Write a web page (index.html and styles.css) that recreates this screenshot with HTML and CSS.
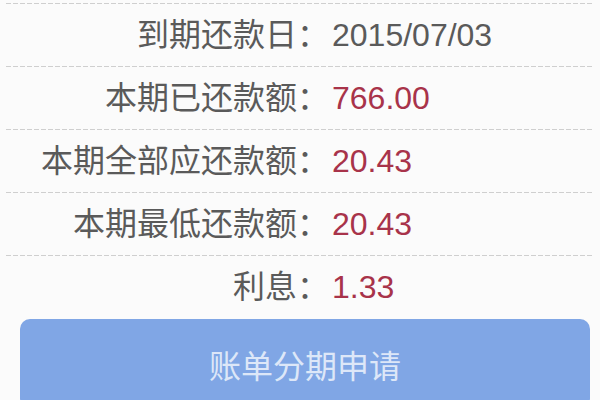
FILE: index.html
```html
<!DOCTYPE html>
<html lang="zh-CN">
<head>
<meta charset="utf-8">
<title>账单</title>
<link rel="stylesheet" href="styles.css">
</head>
<body>
<div class="page">
  <div class="list">
    <div class="row"><span class="label">到期还款日：</span><span class="value">2015/07/03</span></div>
    <div class="row"><span class="label">本期已还款额：</span><span class="value red">766.00</span></div>
    <div class="row"><span class="label">本期全部应还款额：</span><span class="value red">20.43</span></div>
    <div class="row"><span class="label">本期最低还款额：</span><span class="value red">20.43</span></div>
    <div class="row"><span class="label">利息：</span><span class="value red">1.33</span></div>
  </div>
  <div class="btn">账单分期申请</div>
</div>
</body>
</html>
```
FILE: styles.css
```css
html, body {
  margin: 0;
  padding: 0;
  background: #fbfbfb;
}
body {
  font-family: "Liberation Sans", "Noto Sans CJK SC", sans-serif;
  overflow: hidden;
}
.page {
  padding-top: 3px;
}
.list {
  margin: 0 8px 0 6px;
}
.row {
  display: grid;
  grid-template-columns: 323px 1fr;
  align-items: center;
  height: 63px;
  font-size: 32px;
  line-height: 40px;
  background-image: repeating-linear-gradient(to right, #cfcfcf 0 5px, transparent 5px 7px);
  background-size: 100% 1px;
  background-repeat: no-repeat;
  background-position: top left;
}
.label {
  text-align: right;
  color: #5a5a5a;
}
.value {
  padding-left: 3px;
  color: #5a5a5a;
}
.value.red {
  color: #a8334a;
}
.btn {
  margin: 1px 10px 0 20px;
  height: 90px;
  border-radius: 10px;
  background: #80a6e5;
  color: #dde7f8;
  font-size: 32px;
  display: flex;
  align-items: center;
  justify-content: center;
  padding-bottom: 0;
  box-sizing: border-box;
}
```
